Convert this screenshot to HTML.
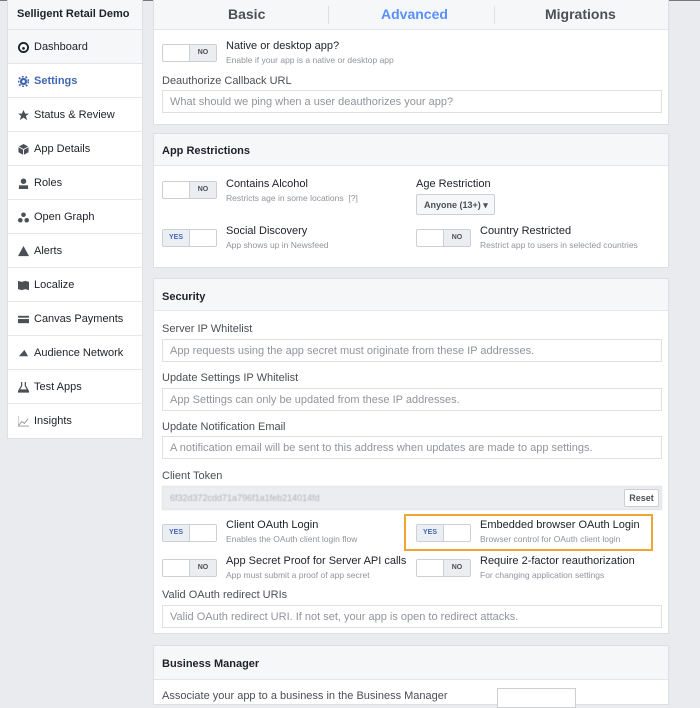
<!DOCTYPE html>
<html><head><meta charset="utf-8"><style>
*{box-sizing:border-box;margin:0;padding:0}
body{width:700px;height:694px;overflow:hidden;background:#e9ebee;font-family:"Liberation Sans",Arial,sans-serif;font-size:11px;color:#4b4f56;position:relative}
.a{position:absolute}
.side{left:7px;top:0;width:136px;background:#fff;border:1px solid #dddfe2;border-top:none}
.side .h{height:30px;background:#f6f7f9;font-weight:bold;color:#1d2129;font-size:11px;padding:8px 0 0 9px;border-bottom:1px solid #e5e6e9}
.side .i{height:34px;border-bottom:1px solid #e5e6e9;padding:11px 0 0 26px;position:relative;color:#1d2129;font-size:11px}
.side .i:last-child{border-bottom:none}
.side .i.s{color:#4267b2;font-weight:bold}
.ic{position:absolute;left:10px;top:12px;width:11px;height:11px}
.panel{left:153px;width:516px;background:#fff;border:1px solid #dddfe2}
.ph{height:32px;background:#f6f7f9;border-bottom:1px solid #e5e6e9;font-weight:bold;color:#1d2129;padding:11px 0 0 8px}
.lbl{font-size:11px;color:#4b4f56}
.inp{left:8px;width:500px;height:23px;border:1px solid #dddfe2;color:#90949c;padding:5px 0 0 7px;font-size:11px;background:#fff}
.tg{width:55px;height:18px;border:1px solid #ccd0d5;border-radius:2px;background:#fff;overflow:hidden}
.tg b{position:absolute;top:0;height:16px;width:27px;background:#ebedf0;font-size:7px;text-align:center;line-height:16px;color:#4b4f56}
.tg.no b{right:0;border-left:1px solid #ccd0d5}
.tg.yes b{left:0;color:#4267b2;border-right:1px solid #ccd0d5;background:#ebeef3}
.t1{font-size:11px;color:#1d2129}
.t2{font-size:8.5px;color:#90949c}
</style></head><body>
<div class="a" style="left:0;top:0;width:700px;height:1px;background:#777"></div>
<div class="a side">
<div class="h">Selligent Retail Demo</div>
<div class="i" style="background:#f6f7f9"><svg class="ic" viewBox="0 0 12 12"><circle cx="6" cy="6" r="5" fill="none" stroke="#1d2129" stroke-width="2"/><circle cx="6" cy="7" r="1.5" fill="#1d2129"/></svg>Dashboard</div>
<div class="i s"><svg class="ic" viewBox="0 0 12 12"><circle cx="6" cy="6" r="4" fill="#4267b2"/><circle cx="6" cy="6" r="5.5" fill="none" stroke="#4267b2" stroke-width="2" stroke-dasharray="2 2"/><circle cx="6" cy="6" r="1.5" fill="#fff"/></svg>Settings</div>
<div class="i"><svg class="ic" viewBox="0 0 12 12"><path d="M6 0l1.8 4H12L8.6 6.6 10 11 6 8.3 2 11l1.4-4.4L0 4h4.2z" fill="#4b4f56"/></svg>Status &amp; Review</div>
<div class="i"><svg class="ic" viewBox="0 0 12 12"><path d="M6 0l5.5 3v6L6 12 .5 9V3z" fill="#4b4f56"/><path d="M.5 3L6 6l5.5-3M6 6v6" stroke="#fff" fill="none"/></svg>App Details</div>
<div class="i"><svg class="ic" viewBox="0 0 12 12"><circle cx="6" cy="3.5" r="3" fill="#4b4f56"/><rect x="1" y="8" width="10" height="4" fill="#4b4f56"/></svg>Roles</div>
<div class="i"><svg class="ic" viewBox="0 0 12 12"><circle cx="6" cy="3" r="2.5" fill="#4b4f56"/><circle cx="2.5" cy="9" r="2.5" fill="#4b4f56"/><circle cx="9.5" cy="9" r="2.5" fill="#4b4f56"/></svg>Open Graph</div>
<div class="i"><svg class="ic" viewBox="0 0 12 12"><path d="M6 0l6 11H0z" fill="#4b4f56"/></svg>Alerts</div>
<div class="i"><svg class="ic" viewBox="0 0 12 12"><path d="M0 1l4 1 4-1 4 1v9l-4-1-4 1-4-1z" fill="#4b4f56"/></svg>Localize</div>
<div class="i"><svg class="ic" viewBox="0 0 12 12"><rect x="0" y="2" width="12" height="8" fill="#4b4f56"/><rect x="0" y="4" width="12" height="1.5" fill="#fff"/></svg>Canvas Payments</div>
<div class="i"><svg class="ic" viewBox="0 0 12 12"><path d="M1 9L7 2l4 7z" fill="#4b4f56"/></svg>Audience Network</div>
<div class="i"><svg class="ic" viewBox="0 0 12 12"><path d="M4 0v4L0 11h12L8 4V0" fill="none" stroke="#4b4f56" stroke-width="1.3"/><path d="M2 8h8l1.5 3h-11z" fill="#4b4f56"/></svg>Test Apps</div>
<div class="i"><svg class="ic" viewBox="0 0 12 12"><path d="M0 0v11h12" fill="none" stroke="#90949c"/><path d="M1 10l3-4 3 2 4-5" fill="none" stroke="#90949c"/></svg>Insights</div>
</div>

<div class="a panel" style="top:0;height:125px;border-top:none">
<div style="height:30px;background:#f6f7f9;border-bottom:1px solid #e5e6e9;position:relative;font-weight:bold;font-size:14px">
<span class="a" style="left:74px;top:6px;color:#4b4f56">Basic</span>
<span class="a" style="left:174px;top:6px;width:1px;height:18px;background:#dddfe2"></span>
<span class="a" style="left:227px;top:6px;color:#5890ff">Advanced</span>
<span class="a" style="left:340px;top:6px;width:1px;height:18px;background:#dddfe2"></span>
<span class="a" style="left:391px;top:6px;color:#4b4f56">Migrations</span>
</div>
<div class="a tg no" style="left:8px;top:44px"><b>NO</b></div>
<div class="a t1" style="left:72px;top:40px">Native or desktop app?</div>
<div class="a t2" style="left:72px;top:55px">Enable if your app is a native or desktop app</div>
<div class="a lbl" style="left:8px;top:75px">Deauthorize Callback URL</div>
<div class="a inp" style="top:90px">What should we ping when a user deauthorizes your app?</div>
</div>

<div class="a panel" style="top:133px;height:135px">
<div class="ph">App Restrictions</div>
<div class="a tg no" style="left:8px;top:47px"><b>NO</b></div>
<div class="a t1" style="left:72px;top:44px">Contains Alcohol</div>
<div class="a t2" style="left:72px;top:59px">Restricts age in some locations &nbsp;[?]</div>
<div class="a t1" style="left:262px;top:44px">Age Restriction</div>
<div class="a" style="left:262px;top:60px;width:79px;height:21px;border:1px solid #ccd0d5;border-radius:2px;background:#f6f7f9;font-weight:bold;font-size:9px;color:#4b4f56;padding:5px 0 0 7px">Anyone (13+) ▾</div>
<div class="a tg yes" style="left:8px;top:95px"><b>YES</b></div>
<div class="a t1" style="left:72px;top:91px">Social Discovery</div>
<div class="a t2" style="left:72px;top:106px">App shows up in Newsfeed</div>
<div class="a tg no" style="left:262px;top:95px"><b>NO</b></div>
<div class="a t1" style="left:326px;top:91px">Country Restricted</div>
<div class="a t2" style="left:326px;top:106px">Restrict app to users in selected countries</div>
</div>

<div class="a panel" style="top:278px;height:356px">
<div class="ph" style="padding-top:12px">Security</div>
<div class="a lbl" style="left:8px;top:44px">Server IP Whitelist</div>
<div class="a inp" style="top:60px">App requests using the app secret must originate from these IP addresses.</div>
<div class="a lbl" style="left:8px;top:93px">Update Settings IP Whitelist</div>
<div class="a inp" style="top:109px">App Settings can only be updated from these IP addresses.</div>
<div class="a lbl" style="left:8px;top:142px">Update Notification Email</div>
<div class="a inp" style="top:157px">A notification email will be sent to this address when updates are made to app settings.</div>
<div class="a lbl" style="left:8px;top:191px">Client Token</div>
<div class="a" style="left:8px;top:207px;width:500px;height:24px;background:#ebedf0;border:1px solid #dddfe2;color:#b0b3b8;font-size:9px;padding:6px 0 0 7px;filter:blur(0.5px)">6f32d372cdd71a796f1a1feb214014fd</div>
<div class="a" style="left:470px;top:210px;width:35px;height:18px;background:#fff;border:1px solid #ccd0d5;border-radius:2px;font-weight:bold;font-size:9px;color:#4b4f56;text-align:center;line-height:16px">Reset</div>
<div class="a tg yes" style="left:8px;top:245px"><b>YES</b></div>
<div class="a t1" style="left:72px;top:240px">Client OAuth Login</div>
<div class="a t2" style="left:72px;top:255px">Enables the OAuth client login flow</div>
<div class="a" style="left:250px;top:235px;width:249px;height:37px;border:2px solid #f0a532"></div>
<div class="a tg yes" style="left:262px;top:245px"><b>YES</b></div>
<div class="a t1" style="left:326px;top:240px">Embedded browser OAuth Login</div>
<div class="a t2" style="left:326px;top:255px">Browser control for OAuth client login</div>
<div class="a tg no" style="left:8px;top:280px"><b>NO</b></div>
<div class="a t1" style="left:72px;top:276px">App Secret Proof for Server API calls</div>
<div class="a t2" style="left:72px;top:291px">App must submit a proof of app secret</div>
<div class="a tg no" style="left:262px;top:280px"><b>NO</b></div>
<div class="a t1" style="left:326px;top:276px">Require 2-factor reauthorization</div>
<div class="a t2" style="left:326px;top:291px">For changing application settings</div>
<div class="a lbl" style="left:8px;top:310px">Valid OAuth redirect URIs</div>
<div class="a inp" style="top:326px">Valid OAuth redirect URI. If not set, your app is open to redirect attacks.</div>
</div>

<div class="a panel" style="top:645px;height:60px">
<div class="ph" style="height:34px;padding-top:12px">Business Manager</div>
<div class="a t1" style="left:8px;top:44px;color:#4b4f56">Associate your app to a business in the Business Manager</div>
<div class="a" style="left:343px;top:42px;width:79px;height:20px;border:1px solid #ccd0d5;background:#fff"></div>
</div>
</body></html>
